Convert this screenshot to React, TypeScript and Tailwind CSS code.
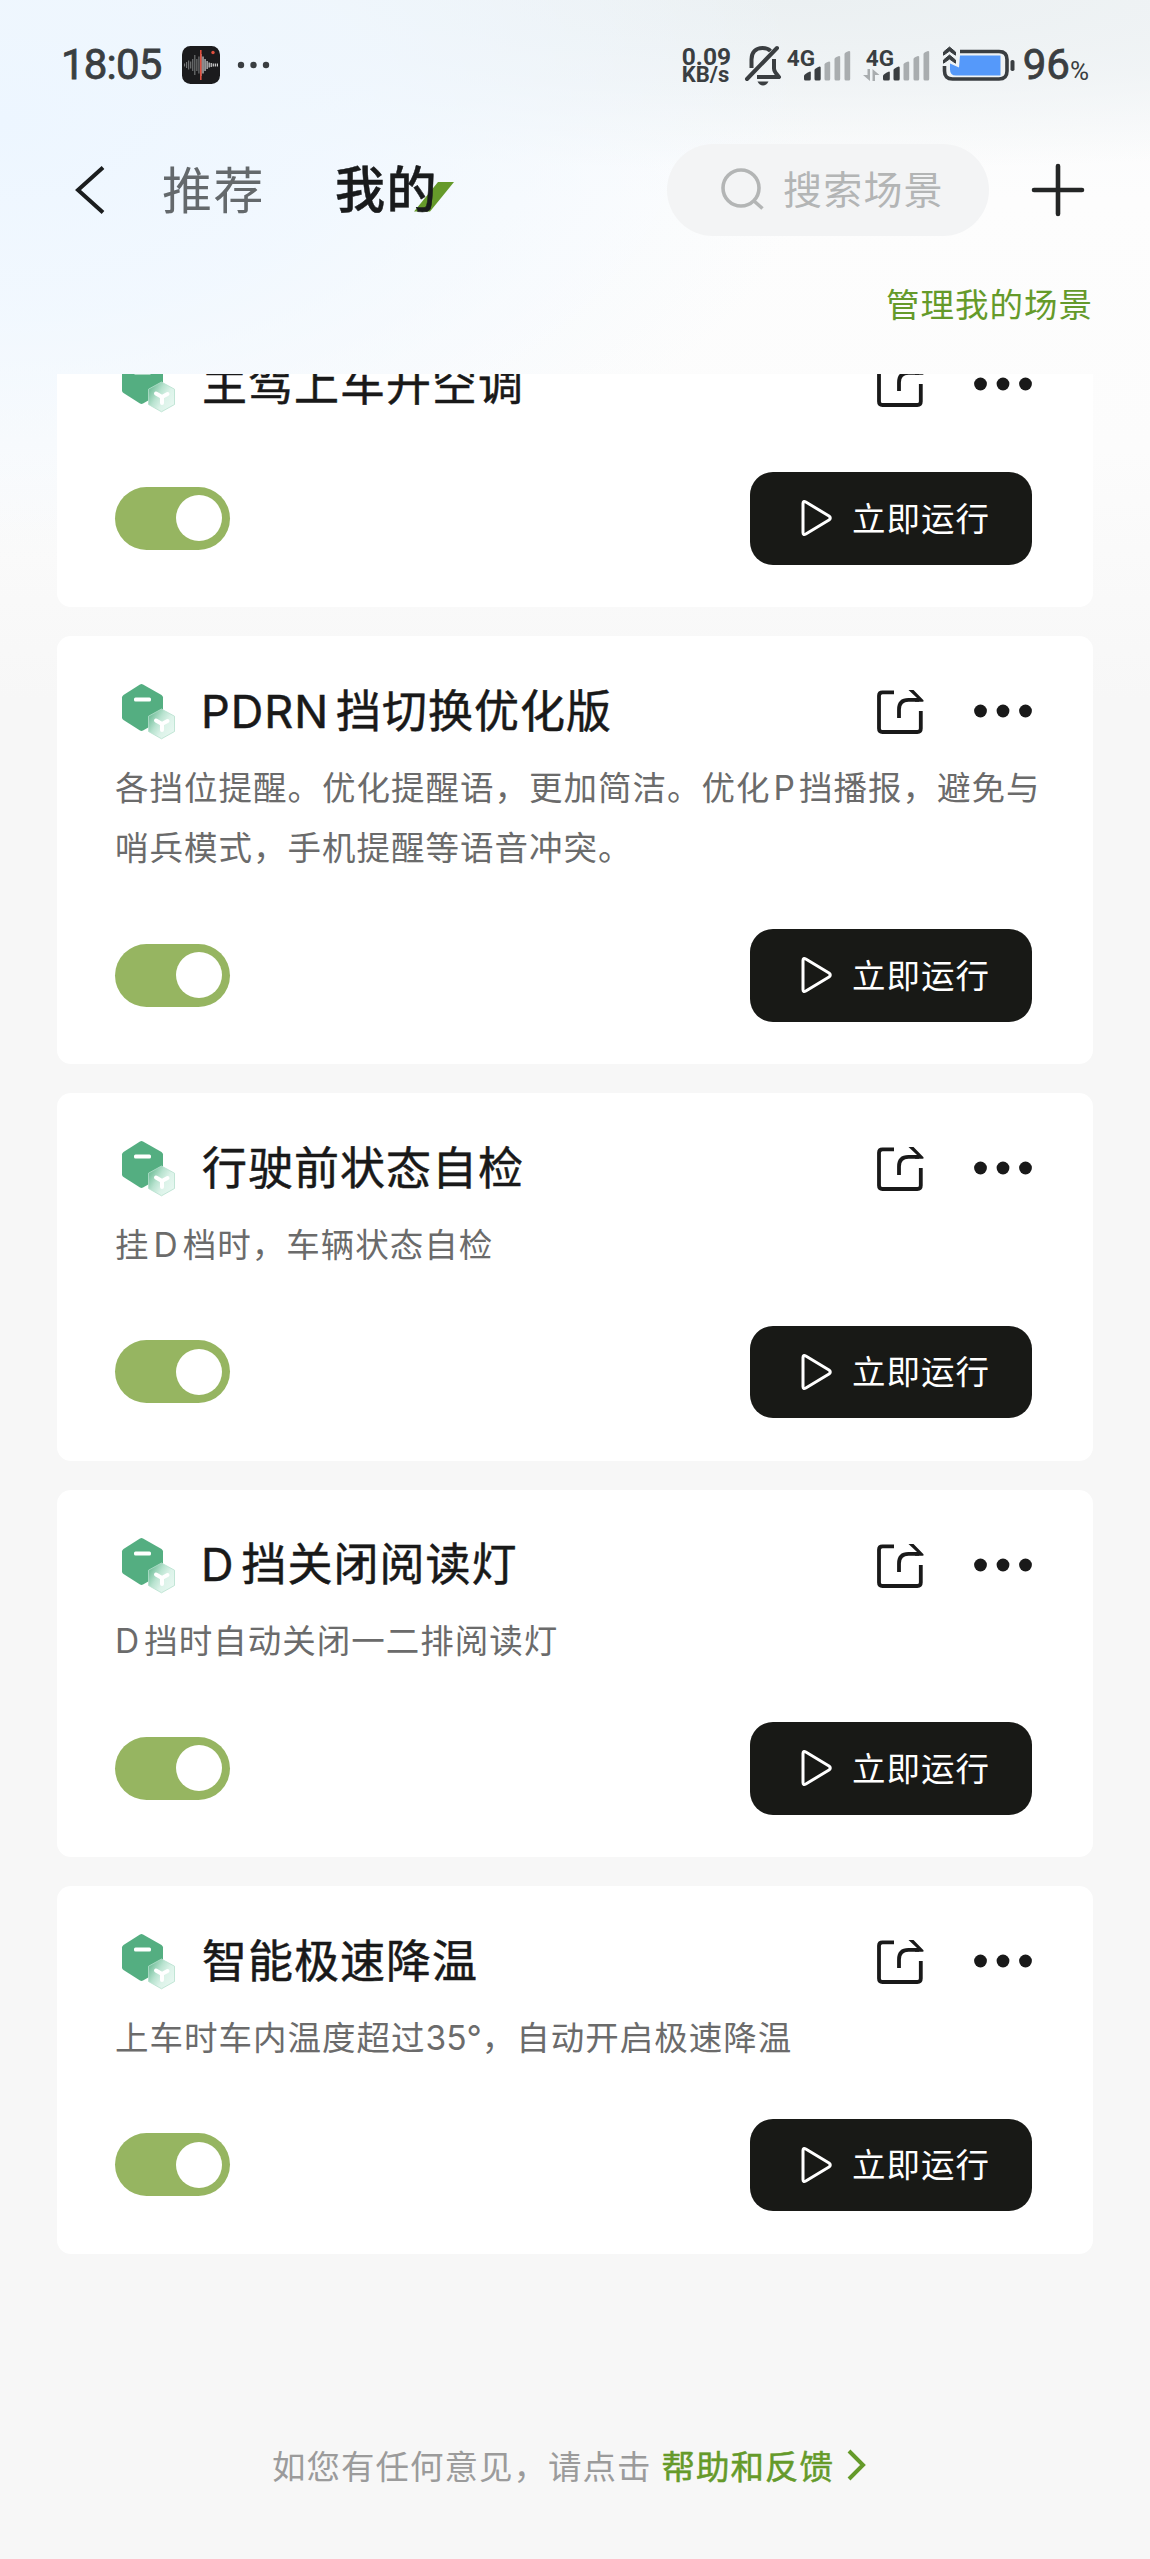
import React, { useState } from 'react';

interface Scene {
  id: string;
  title: React.ReactNode;
  desc?: React.ReactNode;
}

const SCENES: Scene[] = [
  { id: 'ac', title: '主驾上车开空调' },
  {
    id: 'pdrn',
    title: (
      <>
        <Latin className="mr-[7px] -ml-[1px]">PDRN</Latin>挡切换优化版
      </>
    ),
    desc: (
      <>
        各挡位提醒。优化提醒语，更加简洁。优化<Latin className="mx-[3px]">P</Latin>挡播报，避免与哨兵模式，手机提醒等语音冲突。
      </>
    ),
  },
  {
    id: 'check',
    title: '行驶前状态自检',
    desc: (
      <>
        挂<Latin className="mx-[4px]">D</Latin>档时，车辆状态自检
      </>
    ),
  },
  {
    id: 'reading-light',
    title: (
      <>
        <Latin className="mr-[7px] -ml-[1px]">D</Latin>挡关闭阅读灯
      </>
    ),
    desc: (
      <>
        <Latin className="mr-[4px]">D</Latin>挡时自动关闭一二排阅读灯
      </>
    ),
  },
  {
    id: 'cooling',
    title: '智能极速降温',
    desc: (
      <>
        上车时车内温度超过<Latin className="tracking-[0px]">35°</Latin>，自动开启极速降温
      </>
    ),
  },
];

function Latin({ children, className = '' }: { children: React.ReactNode; className?: string }) {
  return <span className={`font-['Inter'] leading-none ${className}`}>{children}</span>;
}

function SignalBars() {
  return (
    <svg width="48" height="31" viewBox="0 0 48 31">
      <path d="M0 29V26q0-2 6-4.500q.8 0 .8 1V29q0 1.500-1.500 1.500H1.500Q0 30.500 0 29z" fill="#3a3e41" />
      <path d="M10.500 29V20q0-1.500 5-3.500q1.200 0 1.200 1V29q0 1.500-1.500 1.500H12q-1.500 0-1.500-1.500z" fill="#3a3e41" />
      <g fill="#a9adaf">
        <path d="M20.500 29V14.500q0-1.500 4.500-3q1.200 0 1.200 1V29q0 1.500-1.500 1.500H22q-1.500 0-1.500-1.500z" />
        <path d="M30.500 29V9q0-1.500 4.500-3q1.200 0 1.200 1V29q0 1.500-1.500 1.500H32q-1.500 0-1.500-1.500z" />
        <path d="M40.500 29V4q0-1.500 4.500-3q1.200 0 1.200 1V29q0 1.500-1.500 1.500H42q-1.500 0-1.500-1.500z" />
      </g>
    </svg>
  );
}

function StatusBar() {
  const wave = [3, 6, 9, 7, 12, 20, 12, 17, 22, 17, 12, 8, 5, 4, 3, 3, 3];
  return (
    <div className="flex h-[130px] items-center pl-[61px] pr-[61px] text-[#3a3e41] font-['Roboto']">
      <span className="w-[102px] text-[42px] leading-none tracking-[-0.8px] [-webkit-text-stroke:0.8px]">18:05</span>
      <svg className="ml-[19px]" width="38" height="38" viewBox="0 0 38 38">
        <rect width="38" height="38" rx="8.500" fill="#1b1b1d" />
        {wave.map((h, i) => (
          <rect key={i} x={2 + i * 2.05} y={19 - h / 2} width="1.100" height={h} fill={i < 8 ? '#77797a' : '#e4e4e4'} />
        ))}
        <rect x="18" y="4" width="1.600" height="30" fill="#e0503f" />
        <circle cx="31" cy="6.500" r="1.700" fill="#e0503f" />
      </svg>
      <svg className="ml-[17px]" width="34" height="8" viewBox="0 0 34 8" fill="#3a3e41">
        <circle cx="4" cy="4" r="3.200" />
        <circle cx="16.500" cy="4" r="3.200" />
        <circle cx="29" cy="4" r="3.200" />
      </svg>

      <div className="ml-auto flex items-center">
        <div className="w-[50px] font-bold">
          <div className="text-[24.500px] leading-[19px]">0.09</div>
          <div className="text-[22px] leading-[18px]">KB/s</div>
        </div>
        <svg className="ml-[12px]" width="38" height="42" viewBox="0 0 38 42" fill="none" stroke="#3a3e41" strokeWidth="4">
          <path d="M7.500 24V15.500C7.500 8 12 4 18.500 4c3.500 0 6 .8 8 3" />
          <path d="M3 35L33 4" strokeLinecap="round" />
          <path d="M30 15v9.500q0 3 5 8.500H13" strokeLinejoin="round" />
          <path d="M13.500 37.500h11q-2 4-5.500 4t-5.500-4z" fill="#3a3e41" stroke="none" />
        </svg>
        <div className="relative ml-[22px]">
          <SignalBars />
          <span className="absolute -left-[17px] -top-[3px] text-[22.500px] font-bold leading-none">4G</span>
        </div>
        <div className="relative ml-[31px]">
          <SignalBars />
          <span className="absolute -left-[17px] -top-[3px] text-[22.500px] font-bold leading-none">4G</span>
          <svg className="absolute -left-[20px] top-[19px]" width="17" height="12" viewBox="0 0 17 12" fill="#a9adaf">
            <path d="M4.500 0H7v12L0 6h4.500zM9.500 12H12V6h4.500L9.500 0z" />
          </svg>
        </div>
        <svg className="ml-[11px]" width="74" height="38" viewBox="0 0 74 38">
          <path d="M18 5.500h39q8 0 8 8v11.500q0 8-8 8H10.500q-8 0-8-8V20" fill="none" stroke="#3a3e41" strokeWidth="3.600" />
          <path d="M18 9.500h40.500v20H14q-6 0-6-6v-6l9 4z" fill="#5599fa" />
          <path d="M1.500 6L7.500 1l6 5v3.200L7.500 5l-6 4.200z" fill="#3a3e41" stroke="#3a3e41" strokeWidth="1" />
          <path d="M1.500 14L7.500 9l6 5v3.200L7.500 13l-6 4.200z" fill="#3a3e41" stroke="#3a3e41" strokeWidth="1" />
          <rect x="68.500" y="14" width="4" height="11" rx="1.800" fill="#3a3e41" />
        </svg>
        <span className="ml-[7px] text-[42px] leading-none [-webkit-text-stroke:0.8px]">96</span>
        <span className="mt-[12px] text-[26px] leading-none">%</span>
      </div>
    </div>
  );
}

function SceneIcon() {
  return (
    <svg width="56" height="58" viewBox="0 0 56 58">
      <defs>
        <linearGradient id="glass" x1="0" y1="0" x2="1" y2="0.700">
          <stop offset="0.050" stopColor="#5fb58b" />
          <stop offset="0.450" stopColor="#b9e3d0" />
          <stop offset="0.700" stopColor="#dcf3e9" />
          <stop offset="1" stopColor="#e6f7f0" />
        </linearGradient>
      </defs>
      <path
        d="M20 2.500q1.500-.8 3 0L41.500 13q1.500 1 1.500 2.500v20q0 1.500-1.500 2.500L23 48.500q-1.500.8-3 0L3.500 38Q2 37 2 35.500v-20Q2 14 3.500 13z"
        fill="#54ae81"
      />
      <rect x="14" y="15.500" width="17" height="4" rx="1.500" fill="#fff" />
      <path
        d="M41.500 27L54.500 34.200V49.500L41.500 56.800L28.500 49.500V34.200z"
        fill="url(#glass)"
        stroke="#b5e0cd"
        strokeWidth="0.800"
        strokeLinejoin="round"
      />
      <path d="M36 38.500L42 42l5.500-3M42 42v6" fill="none" stroke="#fff" strokeWidth="4" strokeLinecap="round" />
    </svg>
  );
}

function ShareIcon() {
  return (
    <svg width="50" height="50" viewBox="0 0 50 50" fill="none" stroke="#191919" strokeWidth="3.800">
      <path d="M19 6.300H7.500Q4 6.300 4 9.800V42.500Q4 46 7.500 46H42.300Q45.800 46 45.800 42.500V25" />
      <path d="M24 32V23.500Q24 13.900 33.500 13.900H44" />
      <path d="M33.500 4h5L48.500 14.300q.5 1.500-1 1.500H40V12h2z" fill="#191919" stroke="none" />
    </svg>
  );
}

function Toggle() {
  const [on, setOn] = useState(true);
  return (
    <button
      onClick={() => setOn(!on)}
      className={`flex h-[63px] w-[115px] items-center rounded-full px-[8.500px] ${on ? 'justify-end bg-[#96b561]' : 'justify-start bg-gray-300'}`}
    >
      <span className="size-[46px] rounded-full bg-white" />
    </button>
  );
}

function SceneCard({ title, desc }: Omit<Scene, 'id'>) {
  return (
    <div className="w-[1036px] shrink-0 rounded-[14px] bg-white pb-[42.500px] pl-[58px] pr-[61px] pt-[40px]">
      <div className="flex h-[70px] items-center">
        <div className="ml-[5px] w-[56px]">
          <SceneIcon />
        </div>
        <h3 className="mb-[5px] ml-[26px] text-[45px] leading-[70px] tracking-[1px] text-[#191919] [-webkit-text-stroke:0.5px]">
          {title}
        </h3>
        <div className="ml-auto flex items-center">
          <ShareIcon />
          <svg className="ml-[49px]" width="58" height="14" viewBox="0 0 58 14" fill="#191919">
            <circle cx="6.500" cy="7" r="6.400" />
            <circle cx="29" cy="7" r="6.400" />
            <circle cx="51.500" cy="7" r="6.400" />
          </svg>
        </div>
      </div>
      {desc && (
        <p className="mt-[9.500px] w-[945px] text-[33.500px] leading-[60.500px] tracking-[1px] text-[#6b6b6b]">{desc}</p>
      )}
      <div className={`flex items-center justify-between ${desc ? 'mt-[52.500px]' : 'mt-[53px]'}`}>
        <Toggle />
        <button className="flex h-[92.500px] w-[282px] items-center rounded-[23px] bg-[#181916] pl-[51px] text-white">
          <svg width="32" height="38" viewBox="0 0 32 38" fill="none" stroke="#fff" strokeWidth="3" strokeLinejoin="round">
            <path d="M2 4.500q0-3 2.800-1.500L28 17q2.600 2 0 4L4.800 35Q2 36.500 2 33.500z" />
          </svg>
          <span className="mb-[3px] ml-[19px] text-[33.500px] tracking-[1px]">立即运行</span>
        </button>
      </div>
    </div>
  );
}

export default function App() {
  return (
    <div className="flex h-[2559px] w-[1150px] flex-col overflow-hidden bg-[#f7f7f7] bg-[radial-gradient(ellipse_820px_440px_at_0px_120px,#edf6ff_0%,#eff7ffcc_45%,#f7fbff00_100%),radial-gradient(ellipse_1100px_170px_at_800px_0px,#ebf0f2_0%,#eef2f4cc_50%,#fafbfc00_100%),linear-gradient(to_bottom,#f8fafb_0px,#fdfdfd_200px,#fcfcfc_450px,#f7f7f7_700px)] font-['Noto_Sans_CJK_SC',sans-serif]">
      <StatusBar />

      <div className="flex h-[120px] items-center pl-[74px]">
        <svg width="32" height="48" viewBox="0 0 32 48" fill="none" stroke="#1b1d1e" strokeWidth="4">
          <path d="M29 1.500L4 24l25 22.500" />
        </svg>
        <span className="mb-[6px] ml-[56px] text-[50px] leading-none tracking-[1.500px] text-[#64696c]">推荐</span>
        <div className="relative mb-[6px] ml-[70px]">
          <svg className="absolute left-[78px] top-[21px]" width="42" height="30" viewBox="0 0 42 30">
            <path d="M25 0H41L17 29.500H1z" fill="#659a2a" />
          </svg>
          <span className="relative text-[50px] font-medium leading-none tracking-[1.500px] text-[#191b1c] [-webkit-text-stroke:0.5px]">
            我的
          </span>
        </div>
        <div className="ml-[229px] flex h-[92px] w-[322px] items-center rounded-full bg-[#f3f4f5] pl-[54px]">
          <svg width="44" height="44" viewBox="0 0 44 44" fill="none" stroke="#b3b5b5" strokeWidth="3.600">
            <circle cx="20" cy="20" r="18" />
            <path d="M33 33l8.500 7.500" />
          </svg>
          <span className="mb-[5px] ml-[18px] text-[39px] leading-none tracking-[1.200px] text-[#b3b5b5]">搜索场景</span>
        </div>
        <svg className="ml-[42px]" width="54" height="54" viewBox="0 0 54 54" stroke="#242626" strokeWidth="4.600" strokeLinecap="round">
          <path d="M27 3v48M3 27h48" />
        </svg>
      </div>

      <div className="flex h-[124px] items-start justify-end pr-[57px] pt-[28px]">
        <a className="text-[33.500px] leading-[50px] tracking-[1px] text-[#659a2a]">管理我的场景</a>
      </div>

      {/* scrolled list, first card is cut off at the top edge */}
      <div className="flex h-[1881px] flex-col items-center overflow-hidden">
        <div className="-mt-[65px] flex flex-col gap-[29px]">
          {SCENES.map((s) => (
            <SceneCard key={s.id} title={s.title} desc={s.desc} />
          ))}
        </div>
      </div>

      <div className="mt-[180px] flex h-[60px] items-center pl-[272px] text-[33.500px] tracking-[1px]">
        <span className="text-[#9b9b9b]">如您有任何意见，请点击</span>
        <a className="ml-[10px] text-[#659a2a] [-webkit-text-stroke:0.5px]">帮助和反馈</a>
        <svg className="ml-[12px]" width="22" height="32" viewBox="0 0 22 32" fill="none" stroke="#659a2a" strokeWidth="4">
          <path d="M3 2l14 14L3 30" />
        </svg>
      </div>
    </div>
  );
}
